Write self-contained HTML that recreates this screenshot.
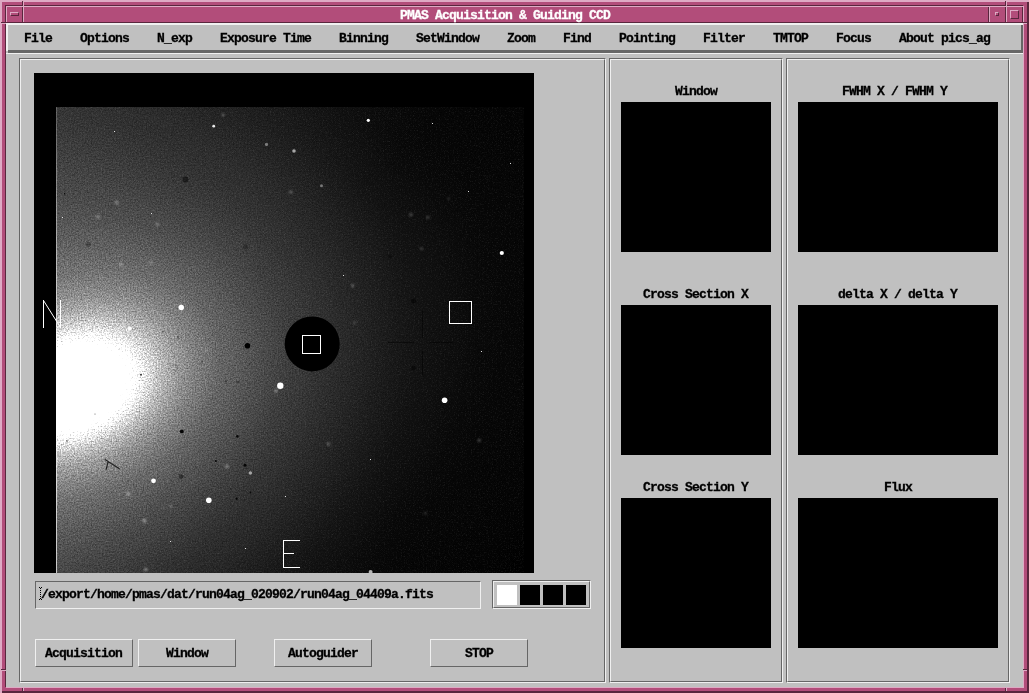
<!DOCTYPE html>
<html><head><meta charset="utf-8">
<style>
html,body{margin:0;padding:0;}
body{width:1029px;height:693px;overflow:hidden;position:relative;background:#c0c0c0;font-family:"Liberation Mono",monospace;font-weight:bold;font-size:13px;line-height:14px;color:#000;}
.a{position:absolute;}
.t{position:absolute;white-space:pre;letter-spacing:-0.8px;height:14px;margin-top:1px;will-change:transform;-webkit-text-stroke:0.3px;}
/* window manager frame */
#wm{left:0;top:0;width:1029px;height:693px;background:#b24d7a;}
.lp{background:#deaac4;}
.dp{background:#59263d;}
#client{left:6px;top:23px;width:1017px;height:664px;background:#c0c0c0;}
/* menubar */
#menubar{left:6px;top:23px;width:1017px;height:30px;background:#c0c0c0;}
.frame{position:absolute;box-sizing:border-box;border:1px solid;border-color:#666 #f0f0f0 #f0f0f0 #666;}
.frame:before{content:"";position:absolute;left:0;top:0;right:0;bottom:0;border:1px solid;border-color:#f0f0f0 #666 #666 #f0f0f0;}
.blk{position:absolute;background:#000;}
.btn{position:absolute;box-sizing:border-box;width:98px;height:28px;border:1px solid;border-color:#f0f0f0 #666 #666 #f0f0f0;background:#c0c0c0;}
</style></head><body>
<div id="wm" class="a"></div>
<!-- outer bevel -->
<div class="a lp" style="left:0;top:0;width:1029px;height:2px"></div>
<div class="a lp" style="left:0;top:0;width:2px;height:693px"></div>
<div class="a dp" style="left:2px;top:691px;width:1027px;height:2px"></div>
<div class="a dp" style="left:1027px;top:2px;width:2px;height:691px"></div>
<!-- inner bevel -->
<div class="a dp" style="left:5px;top:5px;width:1018px;height:1px"></div>
<div class="a dp" style="left:5px;top:5px;width:1px;height:682px"></div>
<div class="a lp" style="left:6px;top:687px;width:1018px;height:1px"></div>
<div class="a lp" style="left:1023px;top:6px;width:1px;height:682px"></div>
<!-- corner resize marks -->
<div class="a dp" style="left:22px;top:1px;width:1px;height:5px"></div><div class="a lp" style="left:23px;top:2px;width:1px;height:4px"></div>
<div class="a dp" style="left:1005px;top:1px;width:1px;height:5px"></div><div class="a lp" style="left:1006px;top:2px;width:1px;height:4px"></div>
<div class="a dp" style="left:22px;top:688px;width:1px;height:4px"></div><div class="a lp" style="left:23px;top:688px;width:1px;height:3px"></div>
<div class="a dp" style="left:1005px;top:688px;width:1px;height:4px"></div><div class="a lp" style="left:1006px;top:688px;width:1px;height:3px"></div>
<div class="a dp" style="left:1px;top:22px;width:5px;height:1px"></div><div class="a lp" style="left:2px;top:23px;width:4px;height:1px"></div>
<div class="a dp" style="left:1px;top:669px;width:5px;height:1px"></div><div class="a lp" style="left:2px;top:670px;width:4px;height:1px"></div>
<div class="a dp" style="left:1023px;top:22px;width:5px;height:1px"></div><div class="a lp" style="left:1023px;top:23px;width:4px;height:1px"></div>
<div class="a dp" style="left:1023px;top:669px;width:5px;height:1px"></div><div class="a lp" style="left:1023px;top:670px;width:4px;height:1px"></div>
<!-- title bar -->
<div class="a lp" style="left:6px;top:6px;width:1017px;height:1px"></div>
<div class="a dp" style="left:6px;top:22px;width:1017px;height:1px"></div>
<!-- menu button -->
<div class="a lp" style="left:6px;top:6px;width:1px;height:16px"></div>
<div class="a dp" style="left:22px;top:7px;width:1px;height:16px"></div>
<div class="a lp" style="left:23px;top:6px;width:1px;height:16px"></div>
<div class="a" style="left:10px;top:12px;width:9px;height:4px;box-sizing:border-box;border:1px solid;border-color:#deaac4 #59263d #59263d #deaac4"></div>
<!-- title / minimize / maximize separators -->
<div class="a dp" style="left:988px;top:7px;width:1px;height:16px"></div>
<div class="a lp" style="left:989px;top:6px;width:1px;height:16px"></div>
<div class="a dp" style="left:1005px;top:7px;width:1px;height:16px"></div>
<div class="a lp" style="left:1006px;top:6px;width:1px;height:16px"></div>
<div class="a dp" style="left:1022px;top:7px;width:1px;height:16px"></div>
<div class="a" style="left:995px;top:12px;width:4px;height:4px;box-sizing:border-box;border:1px solid;border-color:#deaac4 #59263d #59263d #deaac4"></div>
<div class="a" style="left:1010px;top:10px;width:9px;height:9px;box-sizing:border-box;border:1px solid;border-color:#deaac4 #59263d #59263d #deaac4"></div>
<div class="t" style="left:400px;top:8px;color:#fff">PMAS Acquisition &amp; Guiding CCD</div>
<!-- client -->
<div id="client" class="a"></div>
<!-- menubar bevel -->
<div class="a" style="left:6px;top:23px;width:1017px;height:2px;background:#f0f0f0"></div>
<div class="a" style="left:6px;top:23px;width:2px;height:28px;background:#f0f0f0"></div>
<div class="a" style="left:1021px;top:25px;width:2px;height:27px;background:#666"></div>
<div class="a" style="left:8px;top:50px;width:1015px;height:3px;background:#666"></div>
<div class="a" style="left:6px;top:53px;width:1017px;height:1px;background:#f0f0f0"></div>
<div class="t" style="left:24px;top:31px">File</div>
<div class="t" style="left:80px;top:31px">Options</div>
<div class="t" style="left:157px;top:31px">N_exp</div>
<div class="t" style="left:220px;top:31px">Exposure Time</div>
<div class="t" style="left:339px;top:31px">Binning</div>
<div class="t" style="left:416px;top:31px">SetWindow</div>
<div class="t" style="left:507px;top:31px">Zoom</div>
<div class="t" style="left:563px;top:31px">Find</div>
<div class="t" style="left:619px;top:31px">Pointing</div>
<div class="t" style="left:703px;top:31px">Filter</div>
<div class="t" style="left:773px;top:31px">TMTOP</div>
<div class="t" style="left:836px;top:31px">Focus</div>
<div class="t" style="left:899px;top:31px">About pics_ag</div>
<!-- frames -->
<div class="frame" style="left:19px;top:58px;width:587px;height:625px"></div>
<div class="frame" style="left:609px;top:58px;width:174px;height:625px"></div>
<div class="frame" style="left:786px;top:58px;width:224px;height:625px"></div>
<!-- right panels -->
<div class="blk" style="left:621px;top:102px;width:150px;height:150px"></div>
<div class="blk" style="left:621px;top:305px;width:150px;height:150px"></div>
<div class="blk" style="left:621px;top:498px;width:150px;height:150px"></div>
<div class="blk" style="left:798px;top:102px;width:200px;height:150px"></div>
<div class="blk" style="left:798px;top:305px;width:200px;height:150px"></div>
<div class="blk" style="left:798px;top:498px;width:200px;height:150px"></div>
<div class="t" style="left:675px;top:84px">Window</div>
<div class="t" style="left:643px;top:287px">Cross Section X</div>
<div class="t" style="left:643px;top:480px">Cross Section Y</div>
<div class="t" style="left:842px;top:84px">FWHM X / FWHM Y</div>
<div class="t" style="left:838px;top:287px">delta X / delta Y</div>
<div class="t" style="left:884px;top:480px">Flux</div>
<!-- image canvas -->
<div id="canvas" class="blk" style="left:34px;top:73px;width:500px;height:500px;overflow:hidden;isolation:isolate">
<div id="img" style="position:absolute;left:22px;top:34px;width:468px;height:466px;overflow:hidden;filter:brightness(2.9);background:#000">
<div style="position:absolute;left:-884px;top:-620px;width:1800px;height:1800px;transform:rotate(-20deg);background:radial-gradient(ellipse 593px 415px at center,rgb(255,255,255) 0.00%,rgb(255,255,255) 8.04%,rgb(216,216,216) 9.29%,rgb(185,185,185) 10.36%,rgb(162,162,162) 11.43%,rgb(135,135,135) 13.21%,rgb(109,109,109) 15.71%,rgb(88,88,88) 18.57%,rgb(73,73,73) 21.43%,rgb(56,56,56) 26.07%,rgb(43,43,43) 32.32%,rgb(34,34,34) 37.50%,rgb(27,27,27) 42.86%,rgb(21,21,21) 48.21%,rgb(16,16,16) 53.93%,rgb(9,9,9) 62.50%,rgb(4,4,4) 71.43%,rgb(2,2,2) 80.36%,rgb(1,1,1) 92.86%,rgb(0,0,0) 100.00%)"></div>
<div style="position:absolute;left:0;top:0;width:468px;height:466px;mix-blend-mode:screen;background:linear-gradient(90deg,rgb(18,18,18) 0px,rgb(8,8,8) 140px,#000 340px)"></div>
<div style="position:absolute;left:0;top:0;width:468px;height:466px;mix-blend-mode:screen;background:linear-gradient(140deg,rgb(9,9,9) 0px,#000 260px)"></div>
<svg style="position:absolute;left:0;top:0;mix-blend-mode:multiply" width="468" height="466"><filter id="nz" x="0" y="0" width="100%" height="100%" color-interpolation-filters="sRGB"><feTurbulence type="fractalNoise" baseFrequency="0.71 0.67" numOctaves="2" seed="11"/><feColorMatrix type="matrix" values="0.5 0 0 0 0.3  0.5 0 0 0 0.3  0.5 0 0 0 0.3  0 0 0 0 1"/></filter><rect width="468" height="466" filter="url(#nz)"/></svg>
</div>
<svg style="position:absolute;left:22px;top:34px;mix-blend-mode:screen" width="468" height="466"><filter id="nz2" x="0" y="0" width="100%" height="100%" color-interpolation-filters="sRGB"><feTurbulence type="fractalNoise" baseFrequency="0.77 0.73" numOctaves="2" seed="29"/><feColorMatrix type="matrix" values="0.25 0 0 0 -0.135  0.25 0 0 0 -0.135  0.25 0 0 0 -0.135  0 0 0 0 1"/></filter><rect width="468" height="466" filter="url(#nz2)"/></svg>
<svg style="position:absolute;left:22px;top:34px" width="468" height="466">
<defs><filter id="b1" x="-100%" y="-100%" width="300%" height="300%"><feGaussianBlur stdDeviation="0.7"/></filter><filter id="b2" x="-100%" y="-100%" width="300%" height="300%"><feGaussianBlur stdDeviation="1"/></filter><linearGradient id="lg" x1="0" y1="0" x2="0" y2="1"><stop offset="0" stop-color="#fff" stop-opacity=".2"/><stop offset=".35" stop-color="#fff" stop-opacity=".55"/><stop offset="1" stop-color="#fff" stop-opacity=".7"/></linearGradient></defs>
<rect x="0" y="0" width="1" height="466" fill="url(#lg)"/>
<g fill="#000" filter="url(#b1)">
<circle cx="129.4" cy="72.5" r="3.0" opacity="0.50"/>
<circle cx="32.5" cy="137.4" r="2.5" opacity="0.28"/>
<circle cx="189.7" cy="140.0" r="2.5" opacity="0.28"/>
<circle cx="191.5" cy="238.7" r="2.8" opacity="1.00"/>
<circle cx="357.5" cy="194.0" r="2.5" opacity="0.55"/>
<circle cx="357.5" cy="261.0" r="2.3" opacity="0.45"/>
<circle cx="334.0" cy="149.4" r="2.2" opacity="0.30"/>
<circle cx="125.8" cy="324.4" r="1.9" opacity="0.95"/>
<circle cx="181.4" cy="329.4" r="1.3" opacity="0.90"/>
<circle cx="159.8" cy="354.0" r="1.1" opacity="0.90"/>
<circle cx="189.0" cy="358.2" r="1.5" opacity="0.90"/>
<circle cx="125.0" cy="369.6" r="2.4" opacity="0.45"/>
<circle cx="180.6" cy="391.7" r="1.1" opacity="0.90"/>
<circle cx="194.4" cy="385.5" r="0.9" opacity="0.80"/>
<circle cx="85.0" cy="267.8" r="1.0" opacity="0.80"/>
<circle cx="8.6" cy="86.8" r="0.8" opacity="0.90"/>
<circle cx="11.0" cy="334.0" r="0.8" opacity="0.80"/>
<circle cx="107.0" cy="225.0" r="0.8" opacity="0.50"/>
<circle cx="122.0" cy="230.0" r="0.9" opacity="0.50"/>
<circle cx="146.0" cy="255.0" r="0.8" opacity="0.70"/>
<circle cx="170.0" cy="274.5" r="0.7" opacity="0.80"/>
<circle cx="182.0" cy="275.0" r="0.7" opacity="0.80"/>
<circle cx="193.5" cy="257.0" r="0.8" opacity="0.50"/>
<circle cx="72.0" cy="374.0" r="0.7" opacity="0.60"/>
<circle cx="140.0" cy="360.0" r="0.6" opacity="0.70"/>
<circle cx="201.0" cy="345.0" r="0.6" opacity="0.60"/>
<circle cx="64.0" cy="314.0" r="0.6" opacity="0.60"/>
<circle cx="39.0" cy="307.0" r="0.6" opacity="0.60"/>
<circle cx="108.0" cy="338.0" r="0.6" opacity="0.60"/>
<circle cx="175.0" cy="382.0" r="0.7" opacity="0.70"/>
<circle cx="188.0" cy="393.0" r="0.6" opacity="0.60"/>
<circle cx="94.0" cy="398.0" r="0.6" opacity="0.50"/>
<circle cx="155.0" cy="323.0" r="0.6" opacity="0.50"/>
<circle cx="215.0" cy="363.0" r="0.6" opacity="0.60"/>
</g><g fill="#fff" filter="url(#b2)">
<circle cx="167.0" cy="8.0" r="1.5" opacity="0.30"/>
<circle cx="60.6" cy="95.4" r="2.0" opacity="0.32"/>
<circle cx="42.0" cy="110.0" r="2.0" opacity="0.28"/>
<circle cx="101.4" cy="117.4" r="1.8" opacity="0.28"/>
<circle cx="235.0" cy="85.0" r="1.6" opacity="0.35"/>
<circle cx="355.0" cy="107.8" r="1.8" opacity="0.25"/>
<circle cx="372.0" cy="110.4" r="1.6" opacity="0.22"/>
<circle cx="392.5" cy="91.5" r="1.5" opacity="0.15"/>
<circle cx="296.7" cy="178.7" r="1.6" opacity="0.30"/>
<circle cx="365.5" cy="141.6" r="1.6" opacity="0.22"/>
<circle cx="298.5" cy="215.6" r="1.4" opacity="0.22"/>
<circle cx="272.5" cy="337.0" r="1.8" opacity="0.28"/>
<circle cx="423.2" cy="333.3" r="1.6" opacity="0.28"/>
<circle cx="369.4" cy="406.3" r="1.6" opacity="0.16"/>
<circle cx="65.3" cy="157.2" r="1.8" opacity="0.40"/>
<circle cx="94.9" cy="155.9" r="1.6" opacity="0.32"/>
<circle cx="72.3" cy="386.8" r="2.0" opacity="0.40"/>
<circle cx="88.4" cy="413.8" r="2.0" opacity="0.45"/>
<circle cx="171.0" cy="359.5" r="2.0" opacity="0.35"/>
<circle cx="89.7" cy="462.6" r="2.0" opacity="0.35"/>
<circle cx="220.0" cy="284.0" r="1.8" opacity="0.40"/>
<circle cx="151.0" cy="243.0" r="1.5" opacity="0.30"/>
<circle cx="115.0" cy="399.0" r="1.3" opacity="0.30"/>
</g><g fill="#fff" filter="url(#b1)">
<circle cx="238.0" cy="44.0" r="1.8" opacity="0.60"/>
<circle cx="210.5" cy="37.4" r="1.6" opacity="0.40"/>
<circle cx="265.5" cy="78.7" r="1.5" opacity="0.40"/>
<circle cx="194.4" cy="366.0" r="1.7" opacity="0.55"/>
<circle cx="314.6" cy="465.0" r="2.0" opacity="0.70"/>
<circle cx="157.7" cy="19.2" r="1.4" opacity="0.90"/>
<circle cx="312.3" cy="13.3" r="1.6" opacity="1.00"/>
<circle cx="445.8" cy="146.0" r="2.1" opacity="1.00"/>
<circle cx="125.3" cy="200.5" r="2.7" opacity="1.00"/>
<circle cx="224.3" cy="278.7" r="3.2" opacity="1.00"/>
<circle cx="388.6" cy="293.3" r="2.8" opacity="1.00"/>
<circle cx="97.5" cy="373.8" r="2.4" opacity="1.00"/>
<circle cx="152.8" cy="393.3" r="2.8" opacity="1.00"/>
<circle cx="73.8" cy="221.6" r="2.0" opacity="0.90"/>
</g><g fill="#fff" shape-rendering="crispEdges">
<rect x="58" y="24" width="1" height="1" opacity=".85"/>
<rect x="95" y="106" width="1" height="1" opacity=".85"/>
<rect x="6" y="110" width="1" height="1" opacity=".85"/>
<rect x="454" y="56" width="1" height="1" opacity=".85"/>
<rect x="412" y="84" width="1" height="1" opacity=".85"/>
<rect x="376" y="16" width="1" height="1" opacity=".85"/>
<rect x="287" y="168" width="1" height="1" opacity=".85"/>
<rect x="425" y="244" width="1" height="1" opacity=".85"/>
<rect x="314" y="352" width="1" height="1" opacity=".85"/>
<rect x="229" y="389" width="1" height="1" opacity=".85"/>
<rect x="114" y="434" width="1" height="1" opacity=".85"/>
<rect x="189" y="441" width="1" height="1" opacity=".85"/>
</g>
<path d="M48.6 352.2L63.7 362.1M52 355L50.2 362.6" stroke="#000" stroke-width="1.2" opacity=".75" fill="none"/>
<path d="M118 258c2-1 4 1 3 4s-3 2-3 0" stroke="#000" stroke-width=".7" opacity=".4" fill="none"/>
<g stroke="#000" stroke-width="1" opacity=".5" shape-rendering="crispEdges"><path d="M366.5 203v28M366.5 244v24M332 235.5h26M374 235.5h23"/></g>
<circle cx="256.2" cy="236.9" r="27.5" fill="#000"/>
</svg>
<svg style="position:absolute;left:0;top:0" width="500" height="500" shape-rendering="crispEdges" fill="none" stroke="#fff" stroke-width="1">
<rect x="268.5" y="262.5" width="18" height="18"/>
<rect x="415.5" y="228.5" width="22" height="22"/>
<path d="M9.5 255V227"/><path d="M26.5 255V227"/><path d="M9.5 227.5L26.5 254.5" shape-rendering="auto"/>
<path d="M249.5 467v28M249 467.5h17M249 480.5h11M249 494.5h17"/>
</svg>
</div>
<!-- text field -->
<div class="a" style="left:35px;top:581px;width:446px;height:28px;box-sizing:border-box;border:1px solid;border-color:#666 #f0f0f0 #f0f0f0 #666"></div>
<div class="t" style="left:41px;top:587px">/export/home/pmas/dat/run04ag_020902/run04ag_04409a.fits</div>
<svg class="a" style="left:39px;top:587px" width="3" height="13" shape-rendering="crispEdges" fill="#000"><rect x="0" y="0" width="1" height="1"/><rect x="2" y="0" width="1" height="1"/><rect x="1" y="1" width="1" height="1"/><rect x="1" y="3" width="1" height="1"/><rect x="1" y="5" width="1" height="1"/><rect x="1" y="7" width="1" height="1"/><rect x="1" y="9" width="1" height="1"/><rect x="1" y="11" width="1" height="1"/><rect x="0" y="12" width="1" height="1"/><rect x="2" y="12" width="1" height="1"/></svg>
<!-- colour boxes -->
<div class="frame" style="left:492px;top:580px;width:99px;height:29px"></div>
<div class="a" style="left:497px;top:585px;width:20px;height:20px;background:#fff"></div>
<div class="blk" style="left:520px;top:585px;width:20px;height:20px"></div>
<div class="blk" style="left:543px;top:585px;width:20px;height:20px"></div>
<div class="blk" style="left:566px;top:585px;width:20px;height:20px"></div>
<!-- buttons -->
<div class="btn" style="left:35px;top:639px"></div><div class="t" style="left:45px;top:646px">Acquisition</div>
<div class="btn" style="left:138px;top:639px"></div><div class="t" style="left:166px;top:646px">Window</div>
<div class="btn" style="left:274px;top:639px"></div><div class="t" style="left:288px;top:646px">Autoguider</div>
<div class="btn" style="left:430px;top:639px"></div><div class="t" style="left:465px;top:646px">STOP</div>
</body></html>
